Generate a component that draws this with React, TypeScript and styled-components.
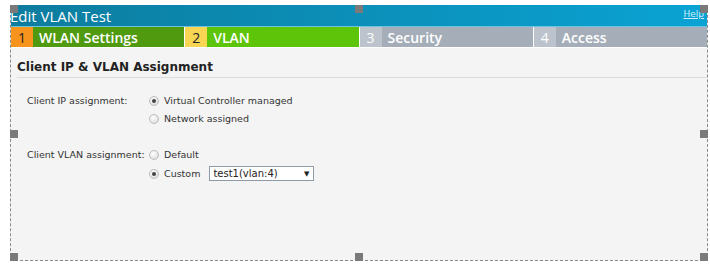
import React from "react";
import styled, { createGlobalStyle } from "styled-components";

const Global = createGlobalStyle`
  html, body { margin: 0; padding: 0; background: #ffffff; }
  body { font-family: "DejaVu Sans", Verdana, sans-serif; }
`;

const Page = styled.div`
  width: 710px;
  height: 271px;
  padding: 5px 0 0 10px;
  box-sizing: border-box;
`;

const Frame = styled.div`
  position: relative;
  width: 698px;
  height: 256px;
  box-sizing: border-box;
  border: 1px dashed #8a8a8a;
  background: #f4f4f4;
  display: flex;
  flex-direction: column;
`;

const TitleBar = styled.div`
  height: 22px;
  background: linear-gradient(to right, #0d7c9e, #0aa3d4);
  border-bottom: 1px solid #6cc3df;
  display: flex;
  align-items: center;
  justify-content: space-between;
  padding: 0 3px 0 0;
  box-sizing: border-box;
  margin-top: -1px;
`;

const Title = styled.div`
  color: #ffffff;
  font-family: "Open Sans", "DejaVu Sans", sans-serif;
  font-size: 15px;
  font-weight: 500;
  margin-left: -1px;
  margin-top: 1px;
`;

const Help = styled.a`
  color: #cfeefa;
  font-size: 9px;
  font-family: "DejaVu Sans", sans-serif;
  text-decoration: underline;
  margin-top: -3px;
`;

const Tabs = styled.div`
  display: flex;
  height: 20px;
  gap: 1px;
  background: #ffffff;
  border-bottom: 1px solid #ffffff;
`;

const Tab = styled.div<{ $bg: string }>`
  flex: 1;
  display: flex;
  background: ${(p) => p.$bg};
`;

const TabNum = styled.div<{ $bg: string; $color: string }>`
  width: 22px;
  background: ${(p) => p.$bg};
  color: ${(p) => p.$color};
  font-family: "Open Sans", sans-serif;
  font-size: 14px;
  display: flex;
  align-items: center;
  justify-content: center;
`;

const TabLabel = styled.div`
  color: #ffffff;
  font-family: "Open Sans", sans-serif;
  font-size: 14px;
  font-weight: 600;
  display: flex;
  align-items: center;
  padding-left: 6px;
`;

const Content = styled.div`
  flex: 1;
  padding: 12px 0 0 6px;
`;

const SectionTitle = styled.div`
  font-family: "DejaVu Sans", sans-serif;
  font-weight: bold;
  font-size: 12px;
  color: #222;
  padding-bottom: 3px;
  border-bottom: 1px solid #dcdcdc;
`;

const Group = styled.div`
  display: grid;
  grid-template-columns: 122px auto;
  row-gap: 4px;
  padding-left: 10px;
  margin-top: 16px;
  font-size: 9.5px;
  color: #333;
  & + & {
    margin-top: 22px;
  }
`;

const Label = styled.div`
  grid-column: 1;
  line-height: 14px;
`;

const Option = styled.label`
  grid-column: 2;
  display: flex;
  align-items: center;
  gap: 5px;
  line-height: 14px;
`;

const Radio = styled.span<{ $on?: boolean }>`
  width: 10px;
  height: 10px;
  border-radius: 50%;
  box-sizing: border-box;
  border: 1px solid #bdbdbd;
  background: radial-gradient(circle at 40% 35%, #ffffff, #d6d6d6);
  display: inline-flex;
  align-items: center;
  justify-content: center;
  &::after {
    content: "";
    width: 4px;
    height: 4px;
    border-radius: 50%;
    background: ${(p) => (p.$on ? "#444" : "transparent")};
  }
`;

const Select = styled.div`
  margin-left: 4px;
  width: 105px;
  height: 15px;
  box-sizing: border-box;
  border: 1px solid #8d9aa8;
  background: #fff;
  display: flex;
  align-items: center;
  justify-content: space-between;
  padding: 0 4px 0 3px;
  color: #222;
  font-size: 10px;
`;

const Arrow = styled.span`
  font-size: 7px;
  color: #222;
`;

const Handle = styled.span<{ $x: string; $y: string }>`
  position: absolute;
  width: 8px;
  height: 8px;
  background: #7a7a7a;
  left: ${(p) => p.$x};
  top: ${(p) => p.$y};
`;

const tabs = [
  { n: "1", label: "WLAN Settings", nb: "#f7941e", nc: "#222", bg: "#4f9a0f" },
  { n: "2", label: "VLAN", nb: "#f8d552", nc: "#222", bg: "#5dc40a" },
  { n: "3", label: "Security", nb: "#bcc3cc", nc: "#fff", bg: "#a4adb8" },
  { n: "4", label: "Access", nb: "#bcc3cc", nc: "#fff", bg: "#a4adb8" },
];

export default function App() {
  return (
    <>
      <Global />
      <Page>
        <Frame>
          <TitleBar>
            <Title>Edit VLAN Test</Title>
            <Help href="#">Help</Help>
          </TitleBar>
          <Tabs>
            {tabs.map((t) => (
              <Tab key={t.n} $bg={t.bg}>
                <TabNum $bg={t.nb} $color={t.nc}>{t.n}</TabNum>
                <TabLabel>{t.label}</TabLabel>
              </Tab>
            ))}
          </Tabs>
          <Content>
            <SectionTitle>Client IP &amp; VLAN Assignment</SectionTitle>
            <Group>
              <Label>Client IP assignment:</Label>
              <Option><Radio $on />Virtual Controller managed</Option>
              <Option><Radio />Network assigned</Option>
            </Group>
            <Group>
              <Label>Client VLAN assignment:</Label>
              <Option><Radio />Default</Option>
              <Option>
                <Radio $on />Custom
                <Select>
                  <span>test1(vlan:4)</span>
                  <Arrow>▼</Arrow>
                </Select>
              </Option>
            </Group>
          </Content>
          <Handle $x="-1px" $y="-1px" />
          <Handle $x="344px" $y="-1px" />
          <Handle $x="689px" $y="-1px" />
          <Handle $x="-1px" $y="124px" />
          <Handle $x="689px" $y="124px" />
          <Handle $x="-1px" $y="247px" />
          <Handle $x="344px" $y="247px" />
          <Handle $x="689px" $y="247px" />
        </Frame>
      </Page>
    </>
  );
}
